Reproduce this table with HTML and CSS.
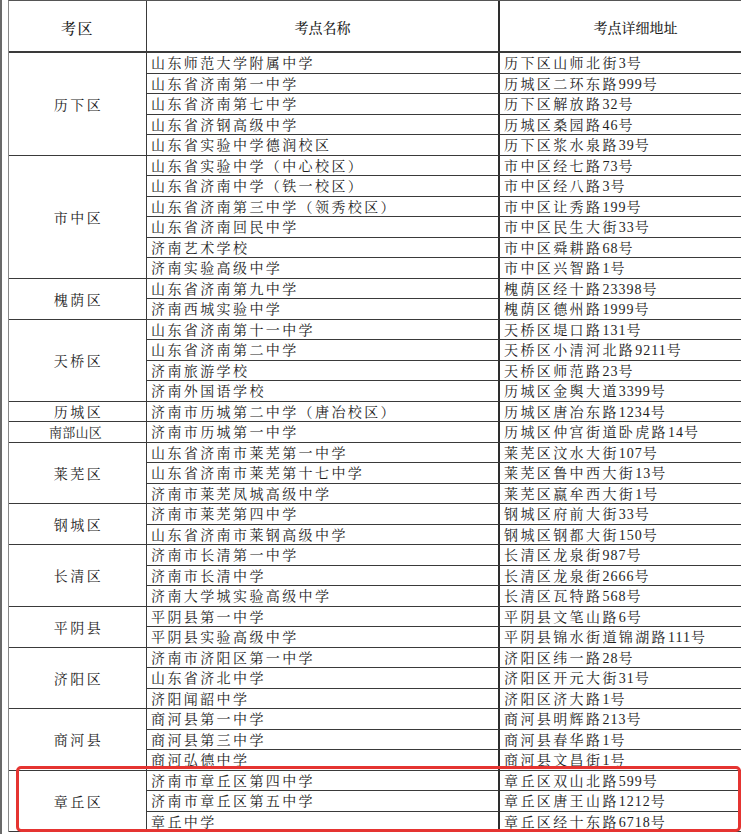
FILE: index.html
```html
<!DOCTYPE html>
<html lang="zh-CN">
<head>
<meta charset="utf-8">
<title>考点一览</title>
<link rel="stylesheet" href="styles.css">
</head>
<body>
<div class="frame">
  <div class="sheet">
    <div class="hd c1">考区</div>
    <div class="hd c2">考点名称</div>
    <div class="hd c3">考点详细地址</div>

    <div class="dist r5">历下区</div>
    <div class="c2">山东师范大学附属中学</div><div class="c3">历下区山师北街<span class="n">3</span>号</div>
    <div class="c2">山东省济南第一中学</div><div class="c3">历城区二环东路<span class="n">999</span>号</div>
    <div class="c2">山东省济南第七中学</div><div class="c3">历下区解放路<span class="n">32</span>号</div>
    <div class="c2">山东省济钢高级中学</div><div class="c3">历城区桑园路<span class="n">46</span>号</div>
    <div class="c2">山东省实验中学德润校区</div><div class="c3">历下区浆水泉路<span class="n">39</span>号</div>

    <div class="dist r6">市中区</div>
    <div class="c2">山东省实验中学（中心校区）</div><div class="c3">市中区经七路<span class="n">73</span>号</div>
    <div class="c2">山东省济南中学（铁一校区）</div><div class="c3">市中区经八路<span class="n">3</span>号</div>
    <div class="c2">山东省济南第三中学（领秀校区）</div><div class="c3">市中区让秀路<span class="n">199</span>号</div>
    <div class="c2">山东省济南回民中学</div><div class="c3">市中区民生大街<span class="n">33</span>号</div>
    <div class="c2">济南艺术学校</div><div class="c3">市中区舜耕路<span class="n">68</span>号</div>
    <div class="c2">济南实验高级中学</div><div class="c3">市中区兴智路<span class="n">1</span>号</div>

    <div class="dist r2">槐荫区</div>
    <div class="c2">山东省济南第九中学</div><div class="c3">槐荫区经十路<span class="n">23398</span>号</div>
    <div class="c2">济南西城实验中学</div><div class="c3">槐荫区德州路<span class="n">1999</span>号</div>

    <div class="dist r4">天桥区</div>
    <div class="c2">山东省济南第十一中学</div><div class="c3">天桥区堤口路<span class="n">131</span>号</div>
    <div class="c2">山东省济南第二中学</div><div class="c3">天桥区小清河北路<span class="n">9211</span>号</div>
    <div class="c2">济南旅游学校</div><div class="c3">天桥区师范路<span class="n">23</span>号</div>
    <div class="c2">济南外国语学校</div><div class="c3">历城区金舆大道<span class="n">3399</span>号</div>

    <div class="dist r1">历城区</div>
    <div class="c2">济南市历城第二中学（唐冶校区）</div><div class="c3">历城区唐冶东路<span class="n">1234</span>号</div>

    <div class="dist r1 tight">南部山区</div>
    <div class="c2">济南市历城第一中学</div><div class="c3">历城区仲宫街道卧虎路<span class="n">14</span>号</div>

    <div class="dist r3">莱芜区</div>
    <div class="c2">山东省济南市莱芜第一中学</div><div class="c3">莱芜区汶水大街<span class="n">107</span>号</div>
    <div class="c2">山东省济南市莱芜第十七中学</div><div class="c3">莱芜区鲁中西大街<span class="n">13</span>号</div>
    <div class="c2">济南市莱芜凤城高级中学</div><div class="c3">莱芜区嬴牟西大街<span class="n">1</span>号</div>

    <div class="dist r2">钢城区</div>
    <div class="c2">济南市莱芜第四中学</div><div class="c3">钢城区府前大街<span class="n">33</span>号</div>
    <div class="c2">山东省济南市莱钢高级中学</div><div class="c3">钢城区钢都大街<span class="n">150</span>号</div>

    <div class="dist r3">长清区</div>
    <div class="c2">济南市长清第一中学</div><div class="c3">长清区龙泉街<span class="n">987</span>号</div>
    <div class="c2">济南市长清中学</div><div class="c3">长清区龙泉街<span class="n">2666</span>号</div>
    <div class="c2">济南大学城实验高级中学</div><div class="c3">长清区瓦特路<span class="n">568</span>号</div>

    <div class="dist r2">平阴县</div>
    <div class="c2">平阴县第一中学</div><div class="c3">平阴县文笔山路<span class="n">6</span>号</div>
    <div class="c2">平阴县实验高级中学</div><div class="c3">平阴县锦水街道锦湖路<span class="n">111</span>号</div>

    <div class="dist r3">济阳区</div>
    <div class="c2">济南市济阳区第一中学</div><div class="c3">济阳区纬一路<span class="n">28</span>号</div>
    <div class="c2">山东省济北中学</div><div class="c3">济阳区开元大街<span class="n">31</span>号</div>
    <div class="c2">济阳闻韶中学</div><div class="c3">济阳区济大路<span class="n">1</span>号</div>

    <div class="dist r3">商河县</div>
    <div class="c2">商河县第一中学</div><div class="c3">商河县明辉路<span class="n">213</span>号</div>
    <div class="c2">商河县第三中学</div><div class="c3">商河县春华路<span class="n">1</span>号</div>
    <div class="c2">商河弘德中学</div><div class="c3">商河县文昌街<span class="n">1</span>号</div>

    <div class="dist r3">章丘区</div>
    <div class="c2">济南市章丘区第四中学</div><div class="c3">章丘区双山北路<span class="n">599</span>号</div>
    <div class="c2">济南市章丘区第五中学</div><div class="c3">章丘区唐王山路<span class="n">1212</span>号</div>
    <div class="c2">章丘中学</div><div class="c3">章丘区经十东路<span class="n">6718</span>号</div>
  </div>
  <div class="mark"></div>
</div>
</body>
</html>
```

FILE: styles.css
```css
html, body {
  margin: 0;
  padding: 0;
  background: #ffffff;
  overflow: hidden;
}

body {
  width: 741px;
  height: 834px;
  font-family: "Liberation Serif", "Noto Serif CJK SC", "Noto Sans CJK SC", serif;
  color: #1e1e1e;
}

.frame {
  position: relative;
  height: 834px;
  border-left: 2px solid #6a6a6a;
  padding-left: 6px;
  box-sizing: border-box;
}

.sheet {
  display: grid;
  grid-template-columns: 138px 353px 276px;
  grid-template-rows: 52px;
  grid-auto-rows: 20.5px;
  width: 769px;
  border-top: 1px solid #555;
  border-left: 1px solid #8a8a8a;
}

.sheet > div {
  border-right: 1px solid #3a3a3a;
  border-bottom: 1px solid #3a3a3a;
  box-sizing: border-box;
  overflow: hidden;
  white-space: nowrap;
}

.hd {
  display: flex;
  align-items: center;
  justify-content: center;
  font-size: 15px;
  font-weight: 500;
  border-bottom: 2px solid #3a3a3a !important;
  padding-top: 2px;
}

.hd.c1 { letter-spacing: 1.5px; }

.c1, .dist {
  grid-column: 1;
}

.dist {
  display: flex;
  align-items: center;
  justify-content: center;
  font-size: 14px;
  letter-spacing: 2.5px;
  padding-left: 2px;
}

.dist.tight {
  font-size: 13px;
  letter-spacing: 0.3px;
  padding-left: 0;
  padding-right: 4px;
}

.r1 { grid-row: span 1; }
.r2 { grid-row: span 2; }
.r3 { grid-row: span 3; }
.r4 { grid-row: span 4; }
.r5 { grid-row: span 5; }
.r6 { grid-row: span 6; }

.c2, .c3 {
  font-size: 14px;
  line-height: 20px;
  letter-spacing: 2.4px;
  padding-left: 4px;
  padding-top: 1px;
}

.c2 {
  border-right: 2px solid #2e2e2e !important;
}

.hd.c2, .hd.c3 {
  padding-left: 0;
  letter-spacing: 0;
  line-height: normal;
}

.hd.c3 {
  padding-right: 4px;
}

.n {
  letter-spacing: 1px;
}

.mark {
  position: absolute;
  left: 14px;
  top: 766px;
  width: 725px;
  height: 66px;
  border: 3px solid #e53431;
  border-radius: 5px;
  box-sizing: border-box;
}
```
